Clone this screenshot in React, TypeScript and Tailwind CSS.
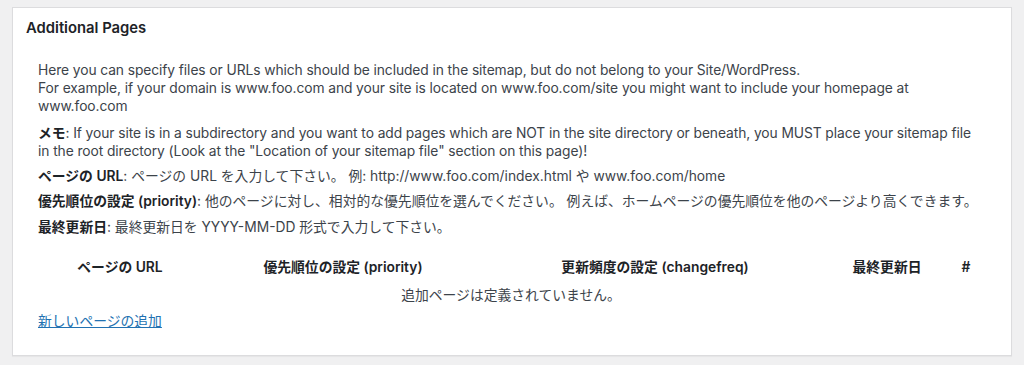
import React from 'react'

const font = { fontFamily: '"Inter", "Noto Sans CJK JP", sans-serif' }

export default function App() {
    return (
        <div className='min-h-[365px] w-[1024px] bg-[#f0f0f1] pt-[7px] pl-[12px] text-[13.8px] leading-[18px] text-[#3c434a]' style={font}>
            <div className='w-[1000px] h-[349px] bg-white border border-[#dcdcde] shadow-[0_1px_1px_rgba(0,0,0,0.04)]'>
                <h2 className='px-[13px] pt-[11px] text-[14.8px] leading-[19px] font-semibold text-[#1d2327]'>Additional Pages</h2>
                <div className='pl-[25px] pr-[8px] pt-[23px]'>
                    <p className='tracking-[-0.08px]'>
                        Here you can specify files or URLs which should be included in the sitemap, but do not belong to your Site/WordPress.<br />
                        For example, if your domain is www.foo.com and your site is located on www.foo.com/site you might want to include your homepage at<br />
                        www.foo.com
                    </p>
                    <p className='mt-[9px] tracking-[-0.08px]'>
                        <b className='font-semibold text-[#1d2327]'>メモ</b>: If your site is in a subdirectory and you want to add pages which are NOT in the site directory or beneath, you MUST place your sitemap file<br />
                        in the root directory (Look at the "Location of your sitemap file" section on this page)!
                    </p>
                    <p className='mt-[7px]'>
                        <b className='font-semibold text-[#1d2327]'>ページの URL</b>: ページの URL を入力して下さい。 例: http://www.foo.com/index.html や www.foo.com/home
                    </p>
                    <p className='mt-[7px]'>
                        <b className='font-semibold text-[#1d2327]'>優先順位の設定 (priority)</b>: 他のページに対し、相対的な優先順位を選んでください。 例えば、ホームページの優先順位を他のページより高くできます。
                    </p>
                    <p className='mt-[8px]'>
                        <b className='font-semibold text-[#1d2327]'>最終更新日</b>: 最終更新日を YYYY-MM-DD 形式で入力して下さい。
                    </p>

                    <div className='mt-[22px] w-[946px]'>
                        <div className='grid grid-cols-[164px_282px_342px_122px_36px] text-center font-semibold text-[#1d2327]'>
                            <div>ページの URL</div>
                            <div>優先順位の設定 (priority)</div>
                            <div>更新頻度の設定 (changefreq)</div>
                            <div>最終更新日</div>
                            <div>#</div>
                        </div>
                        <div className='mt-[10px] text-center'>追加ページは定義されていません。</div>
                    </div>

                    <div className='mt-[8px]'>
                        <a href='#' className='text-[#2271b1] underline'>新しいページの追加</a>
                    </div>
                </div>
            </div>
        </div>
    )
}
